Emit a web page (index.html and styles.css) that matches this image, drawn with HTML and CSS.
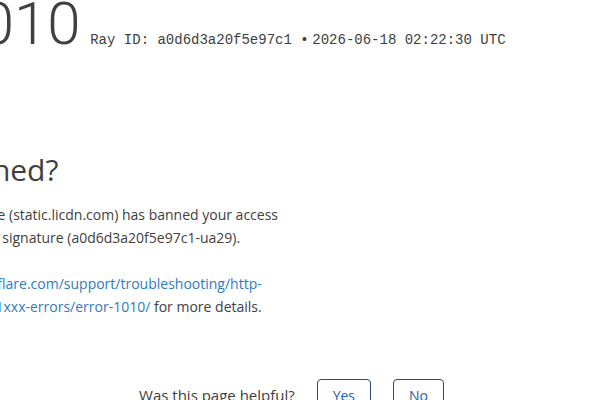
FILE: index.html
```html
<!DOCTYPE html>
<html lang="en-US">
<head>
  <meta charset="UTF-8">
  <meta name="viewport" content="width=device-width, initial-scale=1.0">
  <title>Access denied | static.licdn.com used Cloudflare to restrict access</title>
  <link rel="stylesheet" href="styles.css">
</head>
<body>
  <div id="cf-wrapper">
    <header class="cf-header">
      <h1 class="cf-title"><span>Error</span> <span>1010</span></h1>
      <span class="ray-id">Ray ID: a0d6d3a20f5e97c1 &bull;</span>
      <span class="ray-id">2026-06-18 02:22:30 UTC</span>
    </header>

    <section class="cf-section">
      <div class="what-happened">
        <h2 class="section-title">What happened?</h2>
        <p>The owner of this website (static.licdn.com) has banned your access based on your browser's signature (a0d6d3a20f5e97c1-ua29).</p>
        <p>Please see <a href="#">https://developers.cloudflare.com/support/troubleshooting/http-status-codes/cloudflare-1xxx-errors/error-1010/</a> for more details.</p>
      </div>
    </section>

    <div class="feedback">
      Was this page helpful?
      <button class="feedback-btn" type="button">Yes</button>
      <button class="feedback-btn" type="button">No</button>
    </div>
  </div>
</body>
</html>
```

FILE: styles.css
```css
* { box-sizing: border-box; margin: 0; padding: 0; }
html, body { background: #fff; }
body {
  font-family: "Open Sans", "Noto Sans", sans-serif;
  font-size: 14px;
  color: #404040;
  overflow: hidden;
}
a { color: #2f7bbf; text-decoration: none; }

/* page is wider than the window, scrolled to the middle */
#cf-wrapper {
  width: 960px;
  margin-left: -195px;
}

.cf-header {
  margin-top: -14px;
  margin-bottom: 90px;
}
.cf-title {
  display: inline-block;
  margin-right: 6px;
  font-family: Roboto, "Open Sans", sans-serif;
  font-size: 60px;
  font-weight: 300;
  line-height: 1.25;
  color: #404040;
}
.ray-id {
  font-family: "Liberation Mono", "Courier New", monospace;
  font-size: 14px;
  color: #404040;
}

.cf-section {
  padding-left: 33px;
  margin-bottom: 32px;
}
.what-happened { width: 455px; }
.section-title {
  margin-left: -16px;
  font-size: 30px;
  font-weight: 400;
  line-height: 1.25;
  margin-bottom: 14px;
  color: #404040;
}
.what-happened p {
  line-height: 23px;
}

.feedback {
  text-align: center;
  font-size: 15px;
  padding-top: 29px;
  padding-left: 13px;
}
.feedback-btn {
  font-family: inherit;
  font-size: 14px;
  color: #1d5eab;
  background: #fff;
  border: 1px solid #2b4a7e;
  border-radius: 4px;
  padding: 6px 15px;
  margin-left: 18px;
  line-height: 20px;
}
```
